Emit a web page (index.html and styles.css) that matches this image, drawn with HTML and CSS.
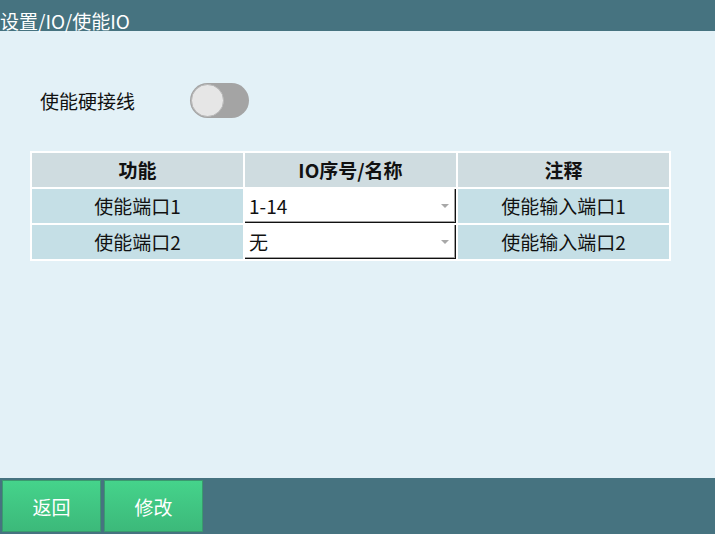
FILE: index.html
```html
<!DOCTYPE html>
<html lang="zh">

<head>
    <meta charset="UTF-8">
    <meta name="viewport" content="width=device-width, initial-scale=1.0">
    <title>使能IO</title>
    <link rel="stylesheet" href="styles.css">
</head>

<body>
    <div class="page">
        <div class="title-bar">设置/IO/使能IO</div>

        <div class="content">
            <div class="switch-row">
                <span class="switch-label">使能硬接线</span>
                <div class="switch"><div class="knob"></div></div>
            </div>

            <table class="io-table">
                <tr>
                    <th>功能</th>
                    <th>IO序号/名称</th>
                    <th>注释</th>
                </tr>
                <tr>
                    <td>使能端口1</td>
                    <td class="sel-cell"><div class="select">1-14<span class="arrow"></span></div></td>
                    <td>使能输入端口1</td>
                </tr>
                <tr>
                    <td>使能端口2</td>
                    <td class="sel-cell"><div class="select">无<span class="arrow"></span></div></td>
                    <td>使能输入端口2</td>
                </tr>
            </table>
        </div>

        <div class="bottom-bar">
            <button class="btn">返回</button>
            <button class="btn">修改</button>
        </div>
    </div>
</body>

</html>
```

FILE: styles.css
```css
body {
    margin: 0;
    font-family: "Noto Sans CJK SC", "Noto Sans", sans-serif;
    color: #111;
}

.page {
    display: flex;
    flex-direction: column;
    width: 715px;
    height: 534px;
    background-color: #e3f1f7;
}

.title-bar {
    height: 31px;
    background-color: #467380;
    color: #fff;
    font-size: 19px;
    line-height: 19px;
    display: flex;
    align-items: flex-end;
    padding-bottom: 1px;
    box-sizing: border-box;
}

.content {
    flex: 1;
    padding: 52px 0 0 30px;
}

.switch-row {
    display: flex;
    align-items: center;
    height: 35px;
    padding-left: 10px;
}

.switch-label {
    font-size: 19px;
    width: 150px;
}

.switch {
    width: 59px;
    height: 35px;
    border-radius: 18px;
    background-color: #a4a4a4;
    position: relative;
}

.switch .knob {
    position: absolute;
    left: 1px;
    top: 1px;
    width: 31px;
    height: 31px;
    border-radius: 50%;
    background-color: #e6e6e6;
    border: 1px solid #b8b8b8;
}

.io-table {
    margin-top: 33px;
    background-color: #fff;
    border-spacing: 2px;
    width: 641px;
    table-layout: fixed;
}

.io-table th,
.io-table td {
    height: 34px;
    padding: 0;
    text-align: center;
    font-size: 19px;
    line-height: 34px;
}

.io-table th {
    background-color: #cfdce0;
    font-weight: bold;
}

.io-table td {
    background-color: #c5dfe6;
}

.io-table td.sel-cell {
    background-color: #fff;
}

.select {
    position: relative;
    height: 34px;
    box-sizing: border-box;
    text-align: left;
    padding-left: 4px;
    line-height: 34px;
    font-size: 19px;
    border-right: 1px solid #111;
    border-bottom: 1px solid #111;
    box-shadow: inset -1px -1px 0 #a0a0a0;
}

.select .arrow {
    position: absolute;
    right: 6px;
    top: 15px;
    border-left: 4px solid transparent;
    border-right: 4px solid transparent;
    border-top: 4px solid #a8a8a8;
}

.bottom-bar {
    height: 56px;
    background-color: #467380;
    display: flex;
    gap: 3px;
    padding: 2px 0 2px 2px;
    box-sizing: border-box;
}

.btn {
    width: 99px;
    height: 52px;
    border: 1px solid #3a9a6e;
    background: linear-gradient(#45d38b, #3cb97a);
    color: #fff;
    font-family: "Noto Sans CJK SC", sans-serif;
    font-size: 19px;
    padding: 0;
}
```
